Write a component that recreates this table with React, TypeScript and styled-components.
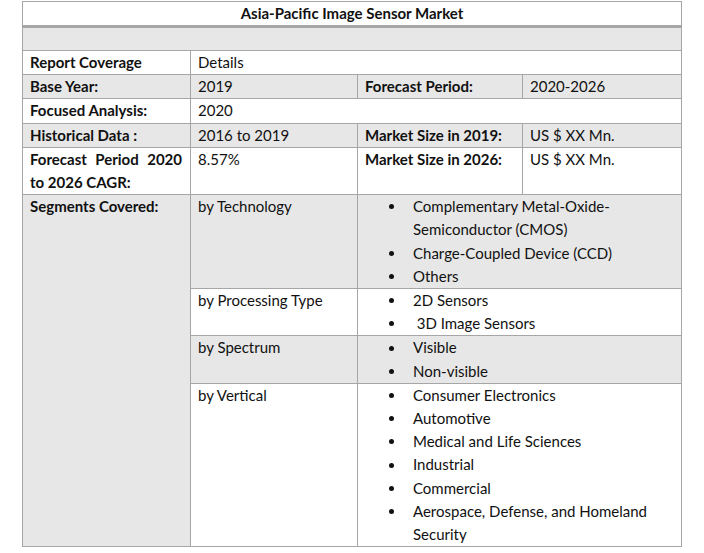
import { Fragment } from "react";
import { createGlobalStyle, styled } from "styled-components";

const GlobalStyle = createGlobalStyle`
  body {
    margin: 0;
    background: #ffffff;
    font-family: "Lato", "Liberation Sans", sans-serif;
    color: #111111;
  }
`;

const Page = styled.div`
  padding: 1px 0 0 22px;
`;

const Table = styled.div`
  display: grid;
  grid-template-columns: 167px 166px 164px 158px;
  gap: 1px;
  padding: 1px;
  width: max-content;
  background: #a6a6a6;
  font-size: 15px;
  line-height: 23.2px;
`;

const Cell = styled.div<{
  $shade?: boolean;
  $span?: number;
  $rows?: number;
  $bold?: boolean;
  $justify?: boolean;
}>`
  background: ${(p) => (p.$shade ? "#e7e7e7" : "#ffffff")};
  grid-column: span ${(p) => p.$span ?? 1};
  grid-row: span ${(p) => p.$rows ?? 1};
  font-weight: ${(p) => (p.$bold ? 700 : 400)};
  text-align: ${(p) => (p.$justify ? "justify" : "left")};
  padding: 0 8px 0 7px;
  min-height: 23px;
`;

const Title = styled.div`
  grid-column: span 4;
  background: #ffffff;
  font-weight: 700;
  text-align: center;
  height: 23px;
  margin-bottom: 2px;
`;

const BlankRow = styled.div`
  grid-column: span 4;
  background: #e7e7e7;
  height: 22px;
`;

const List = styled.ul`
  list-style: none;
  margin: 0;
  padding: 0 8px 0 24px;
`;

const Item = styled.li`
  display: flex;
  align-items: flex-start;
`;

const Bullet = styled.span`
  flex: 0 0 24px;
  height: 23.2px;
  display: flex;
  align-items: center;

  &::before {
    content: "";
    width: 5px;
    height: 5px;
    border-radius: 50%;
    background: #111111;
  }
`;

type Segment = { name: string; items: string[] };

const segments: Segment[] = [
  {
    name: "by Technology",
    items: [
      "Complementary Metal-Oxide-Semiconductor (CMOS)",
      "Charge-Coupled Device (CCD)",
      "Others",
    ],
  },
  { name: "by Processing Type", items: ["2D Sensors", "\u2009\u20093D Image Sensors"] },
  { name: "by Spectrum", items: ["Visible", "Non-visible"] },
  {
    name: "by Vertical",
    items: [
      "Consumer Electronics",
      "Automotive",
      "Medical and Life Sciences",
      "Industrial",
      "Commercial",
      "Aerospace, Defense, and Homeland Security",
    ],
  },
];

export default function App() {
  return (
    <>
      <GlobalStyle />
      <Page>
        <Table>
          <Title>Asia-Pacific Image Sensor Market</Title>
          <BlankRow />

          <Cell $bold>Report Coverage</Cell>
          <Cell $span={3}>Details</Cell>

          <Cell $shade $bold>Base Year:</Cell>
          <Cell $shade>2019</Cell>
          <Cell $shade $bold>Forecast Period:</Cell>
          <Cell $shade>2020-2026</Cell>

          <Cell $bold>Focused Analysis:</Cell>
          <Cell $span={3}>2020</Cell>

          <Cell $shade $bold>Historical Data :</Cell>
          <Cell $shade>2016 to 2019</Cell>
          <Cell $shade $bold>Market Size in 2019:</Cell>
          <Cell $shade>US $ XX Mn.</Cell>

          <Cell $bold $justify>Forecast Period 2020 to 2026 CAGR:</Cell>
          <Cell>8.57%</Cell>
          <Cell $bold>Market Size in 2026:</Cell>
          <Cell>US $ XX Mn.</Cell>

          <Cell $shade $bold $rows={segments.length}>Segments Covered:</Cell>
          {segments.map((seg, i) => (
            <Fragment key={seg.name}>
              <Cell $shade={i % 2 === 0}>{seg.name}</Cell>
              <Cell $shade={i % 2 === 0} $span={2}>
                <List>
                  {seg.items.map((it) => (
                    <Item key={it}>
                      <Bullet />
                      <span>{it}</span>
                    </Item>
                  ))}
                </List>
              </Cell>
            </Fragment>
          ))}
        </Table>
      </Page>
    </>
  );
}
